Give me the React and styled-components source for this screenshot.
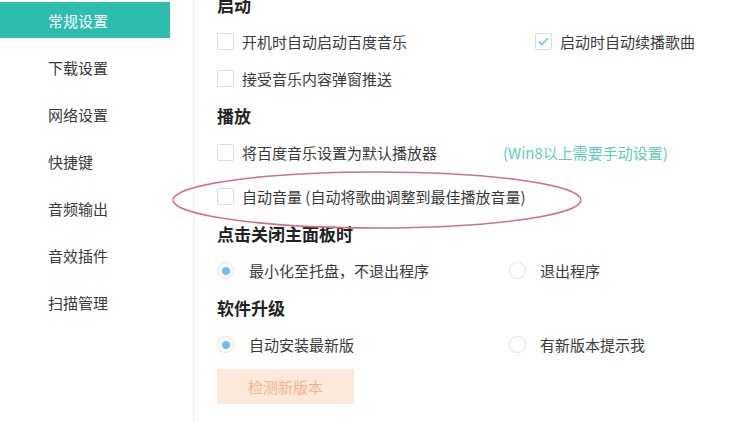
import React from 'react';
import styled, { createGlobalStyle } from 'styled-components';

const GlobalStyle = createGlobalStyle`
  html, body {
    margin: 0;
    padding: 0;
    background: #fff;
  }
  body {
    font-family: "Noto Sans CJK SC", "Noto Sans", sans-serif;
    color: #333;
  }
`;

const Page = styled.div`
  position: relative;
  width: 739px;
  height: 422px;
  overflow: hidden;
  display: flex;
`;

const Sidebar = styled.nav`
  width: 193px;
  flex-shrink: 0;
  border-right: 1px solid #ececec;
  padding-top: 2px;
  display: flex;
  flex-direction: column;
  gap: 11px;
`;

const NavItem = styled.div`
  width: 170px;
  height: 36px;
  box-sizing: border-box;
  padding-left: 48px;
  display: flex;
  align-items: center;
  font-size: 15px;
  color: ${({ $active }) => ($active ? '#fff' : '#3a3a3a')};
  background: ${({ $active }) => ($active ? '#2cbdaf' : 'transparent')};
`;

const Content = styled.main`
  flex: 1;
  padding-left: 23px;
  margin-top: -14px;
  display: flex;
  flex-direction: column;
`;

const Heading = styled.div`
  height: 37px;
  display: flex;
  align-items: center;
  font-size: 17px;
  font-weight: 700;
  color: #222;
`;

const Row = styled.div`
  height: 37px;
  margin-top: ${({ $gapTop }) => $gapTop || 0}px;
  display: grid;
  grid-template-columns: ${({ $split }) => ($split ? `${$split}px 1fr` : '1fr')};
  align-items: center;
`;

const Option = styled.label`
  display: flex;
  align-items: center;
  gap: ${({ $gap }) => $gap || 8}px;
  font-size: 15px;
  color: #3a3a3a;
  white-space: nowrap;
`;

const Box = styled.span`
  width: 17px;
  height: 17px;
  box-sizing: border-box;
  border: 1px solid #dcdcdc;
  border-radius: 2px;
  background: #fff;
  display: flex;
  align-items: center;
  justify-content: center;
  flex-shrink: 0;
`;

const Radio = styled.span`
  width: 17px;
  height: 17px;
  box-sizing: border-box;
  border: 1px solid #e2e2e2;
  border-radius: 50%;
  background: #fff;
  display: flex;
  align-items: center;
  justify-content: center;
  flex-shrink: 0;

  &::after {
    content: '';
    width: 8px;
    height: 8px;
    border-radius: 50%;
    background: ${({ $checked }) => ($checked ? '#72bdec' : 'transparent')};
  }
`;

const Hint = styled.span`
  font-size: 15px;
  color: #5fcac0;
  white-space: nowrap;
`;

const UpdateButton = styled.button`
  margin-top: 6px;
  width: 137px;
  height: 35px;
  border: none;
  background: #fde9dc;
  color: #f4b28e;
  font-family: inherit;
  font-size: 15px;
  padding: 0;
`;

const Annotation = styled.svg`
  position: absolute;
  left: 0;
  top: 0;
  pointer-events: none;
`;

const navItems = ['常规设置', '下载设置', '网络设置', '快捷键', '音频输出', '音效插件', '扫描管理'];

const CheckBox = ({ checked }) => (
  <Box>
    {checked && (
      <svg width="11" height="9" viewBox="0 0 11 9">
        <path d="M1 4.5 L4 7.5 L10 1" fill="none" stroke="#86c3ea" strokeWidth="1.8" />
      </svg>
    )}
  </Box>
);

const App = () => (
  <Page>
    <GlobalStyle />
    <Sidebar>
      {navItems.map((item, i) => (
        <NavItem key={item} $active={i === 0}>{item}</NavItem>
      ))}
    </Sidebar>
    <Content>
      <Heading>启动</Heading>
      <Row $split={318}>
        <Option><CheckBox />开机时自动启动百度音乐</Option>
        <Option><CheckBox checked />启动时自动续播歌曲</Option>
      </Row>
      <Row>
        <Option><CheckBox />接受音乐内容弹窗推送</Option>
      </Row>

      <Heading>播放</Heading>
      <Row $split={286}>
        <Option><CheckBox />将百度音乐设置为默认播放器</Option>
        <Hint>(Win8以上需要手动设置)</Hint>
      </Row>
      <Row $gapTop={7}>
        <Option><CheckBox />自动音量 (自动将歌曲调整到最佳播放音量)</Option>
      </Row>

      <Heading>点击关闭主面板时</Heading>
      <Row $split={292}>
        <Option $gap={15}><Radio $checked />最小化至托盘，不退出程序</Option>
        <Option $gap={14}><Radio />退出程序</Option>
      </Row>

      <Heading>软件升级</Heading>
      <Row $split={292}>
        <Option $gap={15}><Radio $checked />自动安装最新版</Option>
        <Option $gap={14}><Radio />有新版本提示我</Option>
      </Row>
      <div>
        <UpdateButton>检测新版本</UpdateButton>
      </div>
    </Content>

    <Annotation width="739" height="422" viewBox="0 0 739 422">
      <ellipse cx="377" cy="200" rx="204" ry="28" fill="none" stroke="#d4707a" strokeWidth="1.5" />
    </Annotation>
  </Page>
);

export default App;
